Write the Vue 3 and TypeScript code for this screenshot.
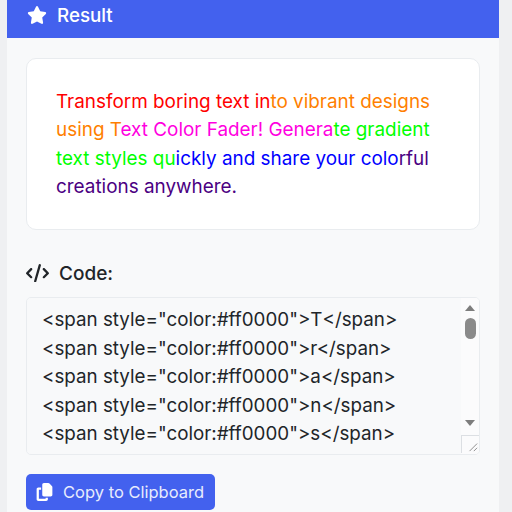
<script setup lang="ts">
const segments = [
  { text: 'Transform boring text in', color: '#ff0000' },
  { text: 'to vibrant designs using T', color: '#ff7f00' },
  { text: 'ext Color Fader! Genera', color: '#ff00e0' },
  { text: 'te gradient text styles qu', color: '#00ff00' },
  { text: 'ickly and share your colo', color: '#0000ff' },
  { text: 'rful creations anywhere.', color: '#4b0082' },
]
const code = segments
  .flatMap((s) => [...s.text].map((c) => `<span style="color:${s.color}">${c}</span>`))
  .join('\n')
</script>

<template>
  <main class="page">
    <section class="card">
      <header class="head">
        <svg class="star" viewBox="0 0 576 512" aria-hidden="true"><path d="M316.9 18C311.6 7 300.4 0 288.1 0s-23.4 7-28.8 18L195 150.3 51.4 171.5c-12 1.8-22 10.2-25.7 21.7s-.7 24.2 7.9 32.7L137.8 329 113.2 474.7c-2 12 3 24.2 12.9 31.3s23 8 33.8 2.3l128.3-68.5 128.3 68.5c10.8 5.7 23.9 4.9 33.8-2.3s14.9-19.3 12.9-31.3L438.5 329 542.7 225.9c8.6-8.5 11.7-21.2 7.9-32.7s-13.7-19.9-25.7-21.7L381.2 150.3 316.9 18z"/></svg>
        <span>Result</span>
      </header>
      <div class="body">
        <div class="preview"><span v-for="s in segments" :key="s.text" :style="{ color: s.color }">{{ s.text }}</span></div>
        <label class="label" for="code">
          <svg class="code-icon" viewBox="0 0 640 512" aria-hidden="true"><path d="M392.8 1.2c-17-4.9-34.7 5-39.6 22l-128 448c-4.9 17 5 34.7 22 39.6s34.7-5 39.6-22l128-448c4.9-17-5-34.7-22-39.6zm80.6 120.1c-12.5 12.5-12.5 32.8 0 45.3L562.7 256l-89.4 89.4c-12.5 12.5-12.5 32.8 0 45.3s32.8 12.5 45.3 0l112-112c12.5-12.5 12.5-32.8 0-45.3l-112-112c-12.5-12.5-32.8-12.5-45.3 0zm-306.7 0c-12.5-12.5-32.8-12.5-45.3 0l-112 112c-12.5 12.5-12.5 32.8 0 45.3l112 112c12.5 12.5 32.8 12.5 45.3 0s12.5-32.8 0-45.3L77.3 256l89.4-89.4c12.5-12.5 12.5-32.8 0-45.3z"/></svg>
          <span>Code:</span>
        </label>
        <div class="code-wrap">
          <textarea id="code" class="code" readonly :value="code"></textarea>
          <div class="bar" aria-hidden="true">
            <i class="arrow up"></i>
            <i class="thumb"></i>
            <i class="arrow down"></i>
            <svg class="corner" viewBox="0 0 18 18"><path d="M8 16 16 8M12.5 16 16 12.5"/></svg>
          </div>
        </div>
        <button class="copy" type="button">
          <svg class="copy-icon" viewBox="0 0 448 512" aria-hidden="true"><path d="M208 0H332.1c12.7 0 24.9 5.1 33.9 14.1l67.9 67.9c9 9 14.1 21.2 14.1 33.9V336c0 26.5-21.5 48-48 48H208c-26.5 0-48-21.5-48-48V48c0-26.5 21.5-48 48-48zM48 128h80v64H64V448H256V416h64v48c0 26.5-21.5 48-48 48H48c-26.5 0-48-21.5-48-48V176c0-26.5 21.5-48 48-48z"/></svg>
          <span>Copy to Clipboard</span>
        </button>
      </div>
    </section>
  </main>
</template>

<style>
html, body { margin: 0; height: 512px; overflow: hidden; background: #eff0f2; }
</style>

<style scoped>
.page {
  width: 512px;
  height: 512px;
  padding: 0 13px 0 7px;
  box-sizing: border-box;
  overflow: hidden;
  font-family: Inter, "Liberation Sans", sans-serif;
}
.card {
  background: #f8f9fa;
  height: 512px;
}
.head {
  height: 38px;
  box-sizing: border-box;
  padding: 0 0 8px 20px;
  display: flex;
  align-items: center;
  gap: 10px;
  background: #4361ee;
  color: #fff;
  font-size: 18.8px;
  font-weight: 500;
}
.star { width: 20px; height: 18px; fill: #fff; }
.body { padding: 20px 19px 0; }
.preview {
  height: 172px;
  box-sizing: border-box;
  padding: 29px 29px;
  background: #fff;
  border: 1px solid #e9ecef;
  border-radius: 10px;
  font-size: 18.9px;
  line-height: 28.3px;
}
.label {
  display: flex;
  align-items: center;
  gap: 10px;
  margin-top: 33px;
  height: 20px;
  color: #212529;
  font-size: 19px;
  font-weight: 500;
}
.code-icon { width: 23px; height: 18.4px; fill: #212529; }
.code-wrap {
  position: relative;
  margin-top: 14px;
  width: 454px;
  height: 158px;
}
.code {
  display: block;
  width: 100%;
  height: 100%;
  padding: 8px 15px;
  box-sizing: border-box;
  background: #f8f9fa;
  border: 1px solid #e9ecef;
  border-radius: 5px;
  color: #212529;
  font-family: inherit;
  font-size: 18.8px;
  line-height: 28.5px;
  outline: none;
  resize: none;
}
.bar {
  position: absolute;
  top: 1px;
  right: 1px;
  bottom: 1px;
  width: 18px;
  display: flex;
  flex-direction: column;
  align-items: center;
  background: #fbfbfc;
  border-radius: 0 4px 4px 0;
}
.arrow {
  width: 0;
  height: 0;
  border-left: 5.5px solid transparent;
  border-right: 5.5px solid transparent;
}
.arrow.up { margin-top: 7px; border-bottom: 6px solid #7d7d7d; }
.arrow.down { margin-top: 81px; border-top: 6px solid #7d7d7d; }
.thumb {
  width: 11px;
  height: 21px;
  margin-top: 7px;
  background: #8a8a8a;
  border-radius: 6px;
}
.corner {
  width: 18px;
  height: 18px;
  margin-top: 9px;
  box-sizing: border-box;
  border-top: 1px solid #dcdfe3;
  border-left: 1px solid #dcdfe3;
  fill: none;
  stroke: #8a8a8a;
  stroke-width: 1;
}
.copy {
  display: flex;
  align-items: center;
  gap: 10px;
  width: 189px;
  height: 36px;
  margin-top: 19px;
  padding: 0 10px;
  box-sizing: border-box;
  background: #4361ee;
  border: 0;
  border-radius: 5px;
  color: #e8ecfd;
  font-family: inherit;
  font-size: 16.5px;
}
.copy-icon { width: 17px; height: 18px; fill: #fff; flex: none; }
</style>
